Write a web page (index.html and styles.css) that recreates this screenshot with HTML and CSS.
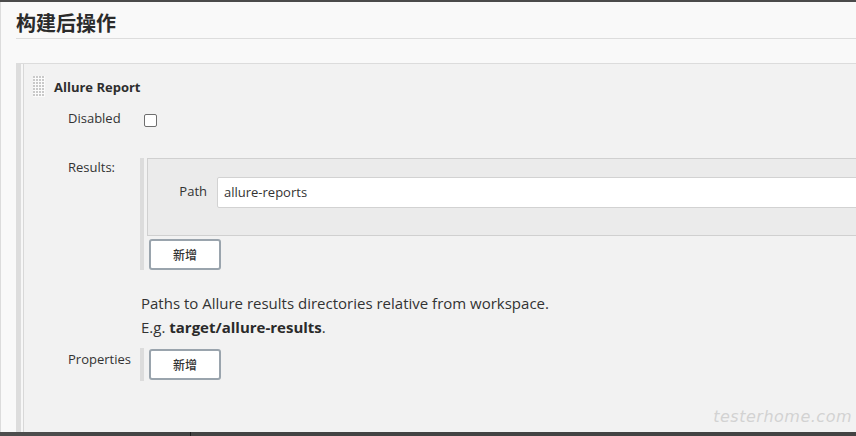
FILE: index.html
```html
<!DOCTYPE html>
<html lang="zh-CN">
<head>
<meta charset="utf-8">
<title>构建后操作</title>
<link rel="stylesheet" href="styles.css">
</head>
<body>
<div class="topbar"></div>
<div class="page">
  <h2 class="page-title">构建后操作</h2>
  <div class="section">
    <div class="section-body">
      <div class="section-head">
        <span class="grip"></span>
        <span class="section-name">Allure Report</span>
      </div>

      <div class="row row-disabled">
        <div class="label">Disabled</div>
        <div class="value"><input class="checkbox" type="checkbox"></div>
      </div>

      <div class="row row-results">
        <div class="label">Results:</div>
        <div class="value">
          <div class="repeat">
            <div class="repeat-box">
              <span class="field-label">Path</span>
              <input class="text-input" type="text" value="allure-reports">
            </div>
            <button class="add-btn" type="button">新增</button>
          </div>
          <div class="help">
            <div>Paths to Allure results directories relative from workspace.</div>
            <div>E.g. <b>target/allure-results</b>.</div>
          </div>
        </div>
      </div>

      <div class="row row-props">
        <div class="label">Properties</div>
        <div class="value">
          <div class="repeat repeat-props">
            <button class="add-btn" type="button">新增</button>
          </div>
        </div>
      </div>
    </div>
  </div>
  <div class="watermark">testerhome.com</div>
</div>
<div class="bottombar">
  <span class="seg seg-a"></span>
  <span class="seg seg-b"></span>
  <span class="seg-tick"></span>
  <span class="seg seg-c"></span>
</div>
</body>
</html>
```

FILE: styles.css
```css
* { box-sizing: border-box; }

html, body {
  margin: 0;
  padding: 0;
}

body {
  width: 856px;
  height: 436px;
  overflow: hidden;
  display: flex;
  flex-direction: column;
  font-family: "Open Sans", "Noto Sans", "Noto Sans CJK SC", sans-serif;
  color: #333;
  background: #f9f9f9;
}

.topbar {
  height: 2px;
  flex: none;
  background: #4b4b4b;
}

.page {
  position: relative;
  flex: 1;
  display: flex;
  flex-direction: column;
  min-height: 0;
  border-left: 1px solid #dcdcdc;
  padding-left: 15px;
  background: #f9f9f9;
}

.page-title {
  margin: 0 0 24px 0;
  padding-top: 5px;
  height: 37px;
  line-height: 32px;
  font-size: 20px;
  font-weight: 700;
  color: #2b2b2b;
  font-family: "Noto Sans CJK SC", "Open Sans", sans-serif;
  border-bottom: 1px solid #dddddd;
}

.section {
  flex: 1;
  display: flex;
  min-height: 0;
  border-top: 1px solid #dcdcdc;
  border-left: 5px solid #dddddd;
  padding-left: 2px;
  background: #f7f7f7;
}

.section-body {
  flex: 1;
  min-width: 0;
  overflow: hidden;
  border-left: 1px solid #d8d8d8;
  background: #f2f2f2;
  padding-top: 12px;
}

.section-head {
  display: flex;
  align-items: center;
  gap: 9px;
  padding-left: 9px;
  height: 21px;
}

.grip {
  width: 12px;
  height: 21px;
  flex: none;
  background-color: #c9c9c9;
  background-image:
    linear-gradient(90deg, transparent 2px, #fbfbfb 2px),
    linear-gradient(180deg, transparent 2px, #fbfbfb 2px);
  background-size: 3px 3px;
}

.section-name {
  font-size: 13px;
  font-weight: 700;
  color: #2e2e2e;
}

.row {
  display: grid;
  grid-template-columns: 72px 1fr;
  padding-left: 44px;
  font-size: 13px;
}

.label {
  line-height: 18px;
  color: #333;
}

.row-disabled {
  margin-top: 11px;
}

.row-disabled .label {
  line-height: 20px;
}

.checkbox {
  appearance: none;
  -webkit-appearance: none;
  display: block;
  margin: 6px 0 0 4px;
  width: 13px;
  height: 13px;
  border: 1px solid #6e6e6e;
  border-radius: 2px;
  background: #fff;
}

.row-results {
  margin-top: 30px;
}

.repeat {
  border-left: 4px solid #dcdcdc;
  padding-left: 3px;
  padding-bottom: 0;
}

.repeat-box {
  display: flex;
  align-items: center;
  margin-right: -40px;
  padding: 18px 20px 27px 0;
  border: 1px solid #d0d0d0;
  background: #ebebeb;
}

.field-label {
  width: 59px;
  flex: none;
  text-align: right;
  margin-right: 10px;
  font-size: 13px;
  line-height: 18px;
  padding-bottom: 3px;
  color: #333;
}

.text-input {
  flex: 1;
  height: 31px;
  border: 1px solid #d2d2d2;
  border-radius: 2px;
  background: #fff;
  padding: 0 0 2px 6px;
  font: inherit;
  font-size: 13px;
  color: #333;
  outline: none;
}

.add-btn {
  display: block;
  margin: 3px 0 0 2px;
  width: 72px;
  height: 31px;
  border: 2px solid #9aa4ad;
  border-radius: 3px;
  background: #fff;
  font-family: "Noto Sans CJK SC", sans-serif;
  font-size: 12px;
  font-weight: 500;
  color: #333;
  padding: 0;
}

.help {
  margin: 21px 0 0 1px;
  font-size: 15px;
  line-height: 24px;
  color: #333;
}

.help b {
  font-weight: 700;
  color: #2a2a2a;
}

.row-props {
  margin-top: 9px;
}

.row-props .label {
  padding-top: 2px;
}

.repeat-props {
  padding-top: 1px;
  padding-bottom: 1px;
}

.repeat-props .add-btn {
  margin-top: 0;
}

.watermark {
  position: absolute;
  right: 4px;
  bottom: 6px;
  font-family: "DejaVu Sans", sans-serif;
  font-style: italic;
  font-weight: 300;
  font-size: 16px;
  letter-spacing: 0.5px;
  color: #d2d2d2;
}

.bottombar {
  height: 4px;
  flex: none;
  display: flex;
  background: #434343;
}

.seg-a { width: 70px; background: #4d4d4d; }
.seg-b { width: 120px; background: #454545; }
.seg-tick { width: 1px; background: #1f1f1f; }
.seg-c { flex: 1; background: #434343; }
```
